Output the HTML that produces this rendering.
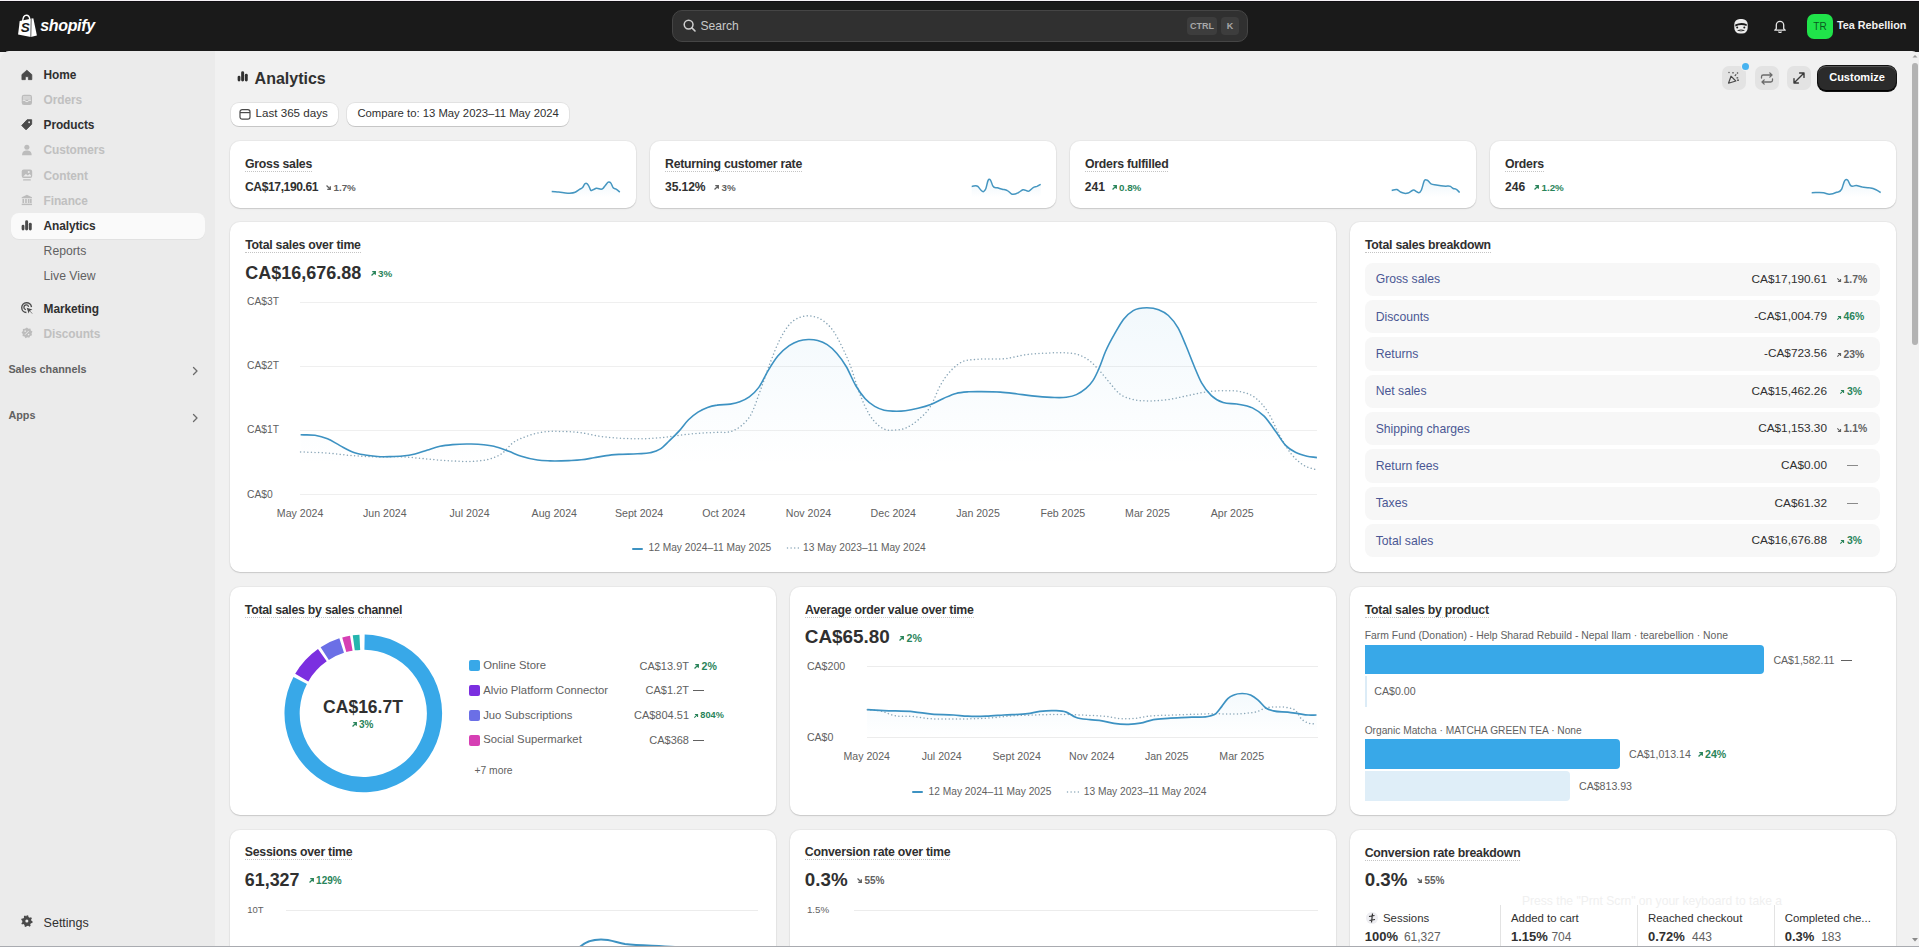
<!DOCTYPE html><html><head><meta charset="utf-8"><style>
*{margin:0;padding:0;box-sizing:border-box}
html,body{width:1919px;height:947px;overflow:hidden;background:#f1f1f1;font-family:"Liberation Sans",sans-serif;position:relative}
.t{position:absolute;white-space:nowrap;line-height:1}
.a{position:absolute}
.card{position:absolute;background:#fff;border-radius:10px;box-shadow:0 1px 0 rgba(26,26,26,.07),0 0 0 1px rgba(0,0,0,.03),0 1px 2px rgba(0,0,0,.08)}
.ul{border-bottom:1px dotted #c4c4c4}
</style></head><body><div class="a" style="left:0;top:0;width:1919px;height:1px;background:#f6f2f6"></div>
<div class="a" style="left:0;top:1px;width:1919px;height:51px;background:#1a1a1a;border-top:1px solid #110e13"></div>
<div class="a" style="left:0;top:51px;width:1919px;height:896px;background:#f1f1f1;border-radius:10px 7px 0 0"></div>
<div class="a" style="left:0;top:51px;width:215px;height:896px;background:#ebebeb;border-radius:10px 0 0 0"></div>
<svg class="a" style="left:0;top:0" width="60" height="50" viewBox="0 0 60 50">
<path d="M18.1 34.4 L19.7 21 L33.3 18.2 L36.9 35.6 L30.8 37 Z" fill="#fff"/>
<path d="M22.6 21.5 C22.8 17.5 24.6 15.2 26.4 15.2 C28.2 15.2 29.6 17 29.8 19.6" fill="none" stroke="#fff" stroke-width="1.4"/>
<path d="M31.2 18.8 L30.8 37" stroke="#1a1a1a" stroke-width=".7"/>
<text x="20.8" y="32" font-family="Liberation Sans" font-weight="700" font-style="italic" font-size="13.5" fill="#1a1a1a">S</text>
</svg>
<div class="t" style="left:40.3px;top:18.46px;font-size:16px;font-weight:700;font-style:italic;color:#fff;letter-spacing:-0.35px;line-height:16px">shopify</div>
<div class="a" style="left:672px;top:10px;width:576px;height:32px;background:#303030;border:1px solid #454545;border-radius:10px"></div>
<svg class="a" style="left:683px;top:19px" width="13" height="13" viewBox="0 0 13 13"><circle cx="5.6" cy="5.6" r="4.4" fill="none" stroke="#cfcfcf" stroke-width="1.5"/><path d="M8.9 8.9 L12 12" stroke="#cfcfcf" stroke-width="1.6" stroke-linecap="round"/></svg>
<div class="t " style="left:700.5px;top:20.1px;font-size:12.10px;font-weight:400;color:#c8c8c8;">Search</div>
<div class="a" style="left:1187px;top:17px;width:30px;height:18px;background:#3d3d3d;border-radius:4px"></div>
<div class="t " style="left:1202.0px;transform:translateX(-50%);top:21.7px;font-size:9.00px;font-weight:700;color:#a8a8a8;">CTRL</div>
<div class="a" style="left:1221px;top:17px;width:18px;height:18px;background:#3d3d3d;border-radius:4px"></div>
<div class="t " style="left:1230.0px;transform:translateX(-50%);top:21.7px;font-size:9.00px;font-weight:700;color:#a8a8a8;">K</div>
<svg class="a" style="left:1734px;top:18.5px" width="14" height="15" viewBox="0 0 14 15">
<rect x="0.3" y="0" width="13.4" height="14.5" rx="5.5" fill="#ececec"/><path d="M1.2 5.6 Q7 2.6 12.8 5.2 L12.6 7 Q7 4.9 1.4 7.4 Z" fill="#1a1a1a"/><circle cx="3.2" cy="8.5" r="1" fill="#1a1a1a"/><circle cx="10.3" cy="8.5" r="1" fill="#1a1a1a"/><path d="M3 11.6 Q7 9.2 11 11.6 Q7 13.2 3 11.6 Z" fill="#1a1a1a"/><path d="M5.6 11.6 H8.4 V12.3 H5.6 Z" fill="#ececec"/></svg>
<svg class="a" style="left:1773px;top:19px" width="14" height="14" viewBox="0 0 14 14" fill="none" stroke="#e6e6e6" stroke-width="1.3">
<path d="M3.3 9.6 V6 A3.7 3.7 0 0 1 10.7 6 V9.6 L12.2 11.2 H1.8 Z" stroke-linejoin="round"/><path d="M5.6 12.6 A1.5 1.5 0 0 0 8.4 12.6"/></svg>
<div class="a" style="left:1807px;top:14px;width:26px;height:25px;background:#20e34a;border-radius:7px"></div>
<div class="t " style="left:1820.0px;transform:translateX(-50%);top:21.5px;font-size:10.00px;font-weight:400;color:#0a5a1f;">TR</div>
<div class="t " style="left:1837.0px;top:20.2px;font-size:10.80px;font-weight:700;color:#f1f1f1;">Tea Rebellion</div>
<svg class="a" style="left:21.1px;top:68.9px" width="12.2" height="12.2" viewBox="0 0 13.5 13.5"><path d="M1 6.2 L6.5 1.3 L12 6.2 V11.8 H8.2 V8.5 H4.8 V11.8 H1 Z" fill="#4a4a4a" stroke="#4a4a4a" stroke-width="0.8" stroke-linejoin="round"/></svg>
<div class="t " style="left:43.6px;top:70.4px;font-size:11.90px;font-weight:700;color:#303030;letter-spacing:-0.1px">Home</div>
<svg class="a" style="left:21.1px;top:93.7px" width="12.2" height="12.2" viewBox="0 0 13.5 13.5"><rect x="0.8" y="0.8" width="11.4" height="11.4" rx="2.5" fill="#bcbcbc"/><path d="M2 7 H4.5 L5.3 8.4 H7.7 L8.5 7 H11" stroke="#ebebeb" stroke-width="1.1" fill="none"/><rect x="2.2" y="2.2" width="8.6" height="4.2" fill="#ebebeb" opacity=".5"/></svg>
<div class="t " style="left:43.6px;top:95.2px;font-size:11.90px;font-weight:700;color:#c0c0c0;letter-spacing:-0.1px">Orders</div>
<svg class="a" style="left:21.1px;top:118.9px" width="12.2" height="12.2" viewBox="0 0 13.5 13.5"><path d="M6.8 0.8 H11.8 V5.8 L5.6 12 L0.8 7.2 Z" fill="#4a4a4a" stroke="#4a4a4a" stroke-width="1" stroke-linejoin="round"/><circle cx="9" cy="3.6" r="1" fill="#ebebeb"/></svg>
<div class="t " style="left:43.6px;top:120.4px;font-size:11.90px;font-weight:700;color:#303030;letter-spacing:-0.1px">Products</div>
<svg class="a" style="left:21.1px;top:143.9px" width="12.2" height="12.2" viewBox="0 0 13.5 13.5"><circle cx="6.5" cy="3.5" r="2.8" fill="#bcbcbc"/><path d="M1.2 12.5 C1.2 8.5 3.5 7.3 6.5 7.3 C9.5 7.3 11.8 8.5 11.8 12.5 Z" fill="#bcbcbc"/></svg>
<div class="t " style="left:43.6px;top:145.4px;font-size:11.90px;font-weight:700;color:#c0c0c0;letter-spacing:-0.1px">Customers</div>
<svg class="a" style="left:21.1px;top:169.3px" width="12.2" height="12.2" viewBox="0 0 13.5 13.5"><rect x="0.8" y="0.6" width="11.6" height="9.4" rx="2.2" fill="#bcbcbc"/><path d="M2.4 8.4 L5.4 5.4 L7.6 7.2 L9.4 5.6 L11 7 V8.4 Z" fill="#ebebeb"/><circle cx="8.6" cy="3.2" r="1.1" fill="#ebebeb"/><rect x="2.2" y="11.4" width="8.8" height="1.4" rx=".7" fill="#bcbcbc"/></svg>
<div class="t " style="left:43.6px;top:170.8px;font-size:11.90px;font-weight:700;color:#c0c0c0;letter-spacing:-0.1px">Content</div>
<svg class="a" style="left:21.1px;top:194.4px" width="12.2" height="12.2" viewBox="0 0 13.5 13.5"><path d="M6.5 0.8 L12.2 3.6 V4.8 H0.8 V3.6 Z" fill="#bcbcbc"/><rect x="1.6" y="5.5" width="1.8" height="4.5" fill="#bcbcbc"/><rect x="4.6" y="5.5" width="1.8" height="4.5" fill="#bcbcbc"/><rect x="7.6" y="5.5" width="1.8" height="4.5" fill="#bcbcbc"/><rect x="10" y="5.5" width="1.8" height="4.5" fill="#bcbcbc"/><rect x="0.8" y="10.7" width="11.4" height="1.6" fill="#bcbcbc"/></svg>
<div class="t " style="left:43.6px;top:195.9px;font-size:11.90px;font-weight:700;color:#c0c0c0;letter-spacing:-0.1px">Finance</div>
<div class="a" style="left:11px;top:213px;width:194px;height:26px;background:#fafafa;border-radius:8px;box-shadow:0 1px 0 rgba(0,0,0,.04)"></div>
<svg class="a" style="left:21.1px;top:219.5px" width="12.2" height="12.2" viewBox="0 0 13.5 13.5"><rect x="0.7" y="5.2" width="3.1" height="6.4" rx="1.55" fill="#4a4a4a"/><rect x="4.6" y="0.4" width="3.3" height="11.2" rx="1.65" fill="#4a4a4a"/><rect x="8.7" y="3.1" width="3.2" height="8.5" rx="1.6" fill="#4a4a4a"/></svg>
<div class="t " style="left:43.6px;top:221.0px;font-size:11.90px;font-weight:700;color:#303030;letter-spacing:-0.1px">Analytics</div>
<div class="t " style="left:43.6px;top:244.9px;font-size:12.20px;font-weight:400;color:#616161;">Reports</div>
<div class="t " style="left:43.6px;top:269.7px;font-size:12.20px;font-weight:400;color:#616161;">Live View</div>
<svg class="a" style="left:21.1px;top:302.4px" width="12.2" height="12.2" viewBox="0 0 13.5 13.5"><path d="M11.6 5.6 A5.4 5.4 0 1 0 6 11.6" fill="none" stroke="#4a4a4a" stroke-width="1.5"/><path d="M8.4 5.4 A2.6 2.6 0 1 0 5.4 8.4" fill="none" stroke="#4a4a4a" stroke-width="1.4"/><path d="M6.3 6.3 L12.6 8.4 L9.8 9.6 L12.8 12.6 L12.4 13 L9.4 10 L8.4 12.8 Z" fill="#4a4a4a"/></svg>
<div class="t " style="left:43.6px;top:303.9px;font-size:11.90px;font-weight:700;color:#303030;letter-spacing:-0.1px">Marketing</div>
<svg class="a" style="left:21.1px;top:327.2px" width="12.2" height="12.2" viewBox="0 0 13.5 13.5"><path d="M6.5 0.5 L8.2 1.9 L10.4 1.6 L10.9 3.8 L12.7 5.1 L11.7 7.1 L12.2 9.2 L10.1 9.9 L9.1 11.9 L7 11.3 L5 12.4 L3.9 10.5 L1.7 10 L2 7.8 L0.6 6.1 L2.1 4.5 L2.1 2.3 L4.3 2 Z" fill="#bcbcbc"/><path d="M4.4 8.6 L8.6 4.4" stroke="#ebebeb" stroke-width="1.1"/><circle cx="4.6" cy="4.6" r=".9" fill="#ebebeb"/><circle cx="8.4" cy="8.4" r=".9" fill="#ebebeb"/></svg>
<div class="t " style="left:43.6px;top:328.7px;font-size:11.90px;font-weight:700;color:#c0c0c0;letter-spacing:-0.1px">Discounts</div>
<div class="t " style="left:8.4px;top:363.9px;font-size:10.80px;font-weight:700;color:#616161;">Sales channels</div>
<div class="t " style="left:8.4px;top:410.1px;font-size:10.80px;font-weight:700;color:#616161;">Apps</div>
<svg class="a" style="left:191px;top:366px" width="8" height="10" viewBox="0 0 8 10"><path d="M2.5 1.5 L6 5 L2.5 8.5" fill="none" stroke="#6b6b6b" stroke-width="1.3" stroke-linecap="round" stroke-linejoin="round"/></svg>
<svg class="a" style="left:191px;top:413px" width="8" height="10" viewBox="0 0 8 10"><path d="M2.5 1.5 L6 5 L2.5 8.5" fill="none" stroke="#6b6b6b" stroke-width="1.3" stroke-linecap="round" stroke-linejoin="round"/></svg>
<svg class="a" style="left:21.1px;top:915.1px" width="12.2" height="12.2" viewBox="0 0 13.5 13.5"><path d="M6.5 0.3 L8 0.6 L8.3 2.2 L9.6 3 L11.1 2.4 L12.1 3.6 L11.2 5 L11.5 6.5 L12.9 7.3 L12.6 8.8 L11 9.2 L10.2 10.5 L10.7 12 L9.4 12.9 L8.1 11.9 L6.5 12.1 L5.4 13.2 L4 12.7 L3.9 11.1 L2.7 10.1 L1.1 10.4 L0.4 9.1 L1.5 8 L1.4 6.4 L0.2 5.3 L0.8 3.9 L2.4 3.9 L3.4 2.7 L3.2 1.1 L4.6 0.5 L5.6 1.6 Z" fill="#4a4a4a"/><circle cx="6.5" cy="6.6" r="1.7" fill="#ebebeb"/></svg>
<div class="t " style="left:43.6px;top:916.7px;font-size:12.50px;font-weight:400;color:#303030;">Settings</div>
<svg class="a" style="left:237.1px;top:71.1px" width="12.2" height="12.2" viewBox="0 0 13.5 13.5"><rect x="0.7" y="5.2" width="3.1" height="6.4" rx="1.55" fill="#303030"/><rect x="4.6" y="0.4" width="3.3" height="11.2" rx="1.65" fill="#303030"/><rect x="8.7" y="3.1" width="3.2" height="8.5" rx="1.6" fill="#303030"/></svg>
<div class="t " style="left:254.6px;top:70.6px;font-size:16.00px;font-weight:700;color:#303030;">Analytics</div>
<div class="a" style="left:231px;top:103px;width:107px;height:23px;background:#fff;border-radius:8px;box-shadow:0 0 0 1px rgba(0,0,0,.06),0 1px 0 rgba(0,0,0,.12)"></div>
<div class="a" style="left:347px;top:103px;width:222px;height:23px;background:#fff;border-radius:8px;box-shadow:0 0 0 1px rgba(0,0,0,.06),0 1px 0 rgba(0,0,0,.12)"></div>
<svg class="a" style="left:239px;top:107.5px" width="12" height="12" viewBox="0 0 12 12" fill="none" stroke="#4a4a4a" stroke-width="1.2"><rect x="1" y="1.6" width="10" height="9.6" rx="2.2"/><path d="M1 4.6 H11"/></svg>
<div class="t " style="left:255.6px;top:107.0px;font-size:11.60px;font-weight:400;color:#303030;">Last 365 days</div>
<div class="t " style="left:357.4px;top:107.8px;font-size:11.30px;font-weight:400;color:#303030;">Compare to: 13 May 2023–11 May 2024</div>
<div class="a" style="left:1722.0px;top:66px;width:24px;height:24px;background:#e3e3e3;border-radius:7px"></div>
<div class="a" style="left:1754.5px;top:66px;width:24px;height:24px;background:#e3e3e3;border-radius:7px"></div>
<div class="a" style="left:1787.0px;top:66px;width:24px;height:24px;background:#e3e3e3;border-radius:7px"></div>
<div class="a" style="left:1742.2px;top:63.1px;width:7px;height:7px;background:#48b3f0;border-radius:50%;box-shadow:0 0 0 1px #f1f1f1"></div>
<svg class="a" style="left:1727px;top:71px" width="14" height="14" viewBox="0 0 14 14" fill="none" stroke="#4a4a4a" stroke-width="1.2" stroke-linejoin="round">
<path d="M1.5 12.2 L4 5.2 L8.8 10 Z"/><circle cx="2" cy="1.5" r=".7" fill="#4a4a4a" stroke="none"/><circle cx="10.5" cy="2" r=".8" fill="#4a4a4a" stroke="none"/><circle cx="11" cy="9.2" r=".9" fill="#4a4a4a" stroke="none"/><path d="M6 1 V2.4 M7.8 4.8 L9.2 3.4 M9.5 6.8 H11.2"/></svg>
<svg class="a" style="left:1759.5px;top:71.5px" width="14" height="13" viewBox="0 0 14 13" fill="none" stroke="#6b6b6b" stroke-width="1.3" stroke-linecap="round" stroke-linejoin="round">
<path d="M1.5 6 V4.8 A1.8 1.8 0 0 1 3.3 3 H12 M9.8 0.9 L12 3 L9.8 5.1"/><path d="M12.5 7 V8.2 A1.8 1.8 0 0 1 10.7 10 H2 M4.2 12.1 L2 10 L4.2 7.9"/></svg>
<svg class="a" style="left:1792px;top:71px" width="14" height="14" viewBox="0 0 14 14" fill="none" stroke="#3a3a3a" stroke-width="1.4" stroke-linecap="round" stroke-linejoin="round">
<path d="M2 12 L12 2 M7.6 2 H12 V6.4 M2 7.6 V12 H6.4"/></svg>
<div class="a" style="left:1818px;top:66px;width:78px;height:25px;background:#2b2b2b;border-radius:8px;box-shadow:inset 0 -1px 0 #000,inset 0 1px 0 rgba(255,255,255,.2),0 0 0 1px #111"></div>
<div class="t " style="left:1857.0px;transform:translateX(-50%);top:71.8px;font-size:11.00px;font-weight:700;color:#fff;">Customize</div>
<div class="a" style="left:1912px;top:63px;width:6px;height:282px;background:#b3b3b3;border-radius:3px"></div>
<svg class="a" style="left:1911px;top:53px" width="8" height="6" viewBox="0 0 8 6"><path d="M1.5 4.5 L4 2 L6.5 4.5 Z" fill="#9a9a9a"/></svg>
<svg class="a" style="left:1911px;top:937px" width="8" height="6" viewBox="0 0 8 6"><path d="M1 1 L4 4.5 L7 1 Z" fill="#8a8a8a"/></svg>
<div class="a" style="left:0;top:946px;width:1919px;height:1px;background:#a9abb0"></div>
<div class="card" style="left:230px;top:141px;width:406px;height:67px"></div>
<div class="card" style="left:650px;top:141px;width:406px;height:67px"></div>
<div class="card" style="left:1070px;top:141px;width:406px;height:67px"></div>
<div class="card" style="left:1490px;top:141px;width:406px;height:67px"></div>
<div class="t " style="left:245.0px;top:157.8px;font-size:12.30px;font-weight:700;color:#303030;letter-spacing:-0.25px"><span class="ul">Gross sales</span></div>
<div class="t " style="left:665.0px;top:157.8px;font-size:12.30px;font-weight:700;color:#303030;letter-spacing:-0.25px"><span class="ul">Returning customer rate</span></div>
<div class="t " style="left:1085.0px;top:157.8px;font-size:12.30px;font-weight:700;color:#303030;letter-spacing:-0.25px"><span class="ul">Orders fulfilled</span></div>
<div class="t " style="left:1505.0px;top:157.8px;font-size:12.30px;font-weight:700;color:#303030;letter-spacing:-0.25px"><span class="ul">Orders</span></div>
<div class="t " style="left:245.0px;top:181.2px;font-size:12.10px;font-weight:700;color:#303030;letter-spacing:-0.4px">CA$17,190.61</div>
<svg class="a" style="left:325.0px;top:184.4px" width="7" height="7" viewBox="0 0 10 10"><path d="M2.2 2.2 L7.6 7.6 M3.2 7.6 H7.6 V3.2" fill="none" stroke="#616161" stroke-width="1.8"/></svg>
<div class="t " style="left:333.5px;top:183.1px;font-size:9.80px;font-weight:700;color:#616161;">1.7%</div>
<div class="t " style="left:665.0px;top:181.2px;font-size:12.10px;font-weight:700;color:#303030;letter-spacing:-0.1px">35.12%</div>
<svg class="a" style="left:713.0px;top:184.4px" width="7" height="7" viewBox="0 0 10 10"><path d="M2.2 7.8 L7.6 2.4 M3.2 2.4 H7.6 V6.8" fill="none" stroke="#616161" stroke-width="1.8"/></svg>
<div class="t " style="left:721.5px;top:183.1px;font-size:9.80px;font-weight:700;color:#616161;">3%</div>
<div class="t " style="left:1084.7px;top:181.2px;font-size:12.10px;font-weight:700;color:#303030;">241</div>
<svg class="a" style="left:1110.5px;top:184.4px" width="7" height="7" viewBox="0 0 10 10"><path d="M2.2 7.8 L7.6 2.4 M3.2 2.4 H7.6 V6.8" fill="none" stroke="#29845a" stroke-width="1.8"/></svg>
<div class="t " style="left:1119.0px;top:183.1px;font-size:9.80px;font-weight:700;color:#29845a;">0.8%</div>
<div class="t " style="left:1505.0px;top:181.2px;font-size:12.10px;font-weight:700;color:#303030;">246</div>
<svg class="a" style="left:1533.0px;top:184.4px" width="7" height="7" viewBox="0 0 10 10"><path d="M2.2 7.8 L7.6 2.4 M3.2 2.4 H7.6 V6.8" fill="none" stroke="#29845a" stroke-width="1.8"/></svg>
<div class="t " style="left:1541.5px;top:183.1px;font-size:9.80px;font-weight:700;color:#29845a;">1.2%</div>
<svg class="a" style="left:230px;top:141px" width="406" height="67" viewBox="0 0 406 67"><defs><linearGradient id="sg230" x1="0" y1="38" x2="0" y2="56" gradientUnits="userSpaceOnUse"><stop offset="0" stop-color="#3a9fd8" stop-opacity=".10"/><stop offset="1" stop-color="#3a9fd8" stop-opacity="0"/></linearGradient></defs><path d="M321.7 50.6 C324.1 50.8 326.4 50.9 328.8 51.1 C331.9 51.4 335.1 52.3 338.2 52.2 C340.5 52.1 342.9 52.3 345.2 51.3 C346.8 50.6 348.3 49.2 349.9 48.2 C350.7 47.7 351.5 47.6 352.3 46.8 C353.2 45.9 354.2 43.2 355.1 42.6 C355.7 42.2 356.4 42.2 357.0 42.6 C357.6 43.0 358.2 43.9 358.8 45.0 C359.4 46.1 360.1 48.5 360.7 49.2 C361.5 50.1 362.2 48.9 363.0 48.7 C364.1 48.4 365.2 47.6 366.3 47.3 C368.5 46.7 370.7 49.5 372.9 47.5 C373.7 46.8 374.5 45.4 375.3 44.5 C376.4 43.2 377.4 41.2 378.5 41.0 C379.3 40.8 380.1 41.1 380.9 42.1 C381.7 43.1 382.4 45.8 383.2 46.8 C384.2 48.1 385.1 47.6 386.1 48.2 C387.3 49.0 388.6 50.1 389.8 51.1 L389.8 67 L321.7 67 Z" fill="url(#sg230)"/><path d="M321.7 50.6 C324.1 50.8 326.4 50.9 328.8 51.1 C331.9 51.4 335.1 52.3 338.2 52.2 C340.5 52.1 342.9 52.3 345.2 51.3 C346.8 50.6 348.3 49.2 349.9 48.2 C350.7 47.7 351.5 47.6 352.3 46.8 C353.2 45.9 354.2 43.2 355.1 42.6 C355.7 42.2 356.4 42.2 357.0 42.6 C357.6 43.0 358.2 43.9 358.8 45.0 C359.4 46.1 360.1 48.5 360.7 49.2 C361.5 50.1 362.2 48.9 363.0 48.7 C364.1 48.4 365.2 47.6 366.3 47.3 C368.5 46.7 370.7 49.5 372.9 47.5 C373.7 46.8 374.5 45.4 375.3 44.5 C376.4 43.2 377.4 41.2 378.5 41.0 C379.3 40.8 380.1 41.1 380.9 42.1 C381.7 43.1 382.4 45.8 383.2 46.8 C384.2 48.1 385.1 47.6 386.1 48.2 C387.3 49.0 388.6 50.1 389.8 51.1" fill="none" stroke="#4596c0" stroke-width="1.5" stroke-linejoin="round"/></svg>
<svg class="a" style="left:650px;top:141px" width="406" height="67" viewBox="0 0 406 67"><defs><linearGradient id="sg650" x1="0" y1="38" x2="0" y2="56" gradientUnits="userSpaceOnUse"><stop offset="0" stop-color="#3a9fd8" stop-opacity=".10"/><stop offset="1" stop-color="#3a9fd8" stop-opacity="0"/></linearGradient></defs><path d="M321.7 45.4 C323.7 45.4 325.8 43.8 327.8 45.4 C328.7 46.2 329.7 47.8 330.6 48.7 C331.6 49.6 332.5 51.0 333.5 50.6 C334.3 50.3 335.0 49.7 335.8 47.8 C336.6 45.9 337.3 40.8 338.1 39.3 C338.9 37.8 339.7 38.1 340.5 39.1 C341.3 40.1 342.0 43.5 342.8 44.9 C344.4 47.8 345.9 46.3 347.5 46.8 C349.1 47.4 350.6 47.8 352.2 48.2 C353.9 48.7 355.7 48.7 357.4 49.6 C359.0 50.4 360.5 52.7 362.1 53.2 C364.3 53.9 366.4 52.6 368.6 51.5 C370.0 50.8 371.5 49.1 372.9 48.7 C374.9 48.1 377.0 50.9 379.0 50.1 C380.4 49.5 381.8 47.4 383.2 46.6 C384.4 45.9 385.7 45.9 386.9 45.4 C388.2 44.8 389.4 44.0 390.7 43.3 L390.7 67 L321.7 67 Z" fill="url(#sg650)"/><path d="M321.7 45.4 C323.7 45.4 325.8 43.8 327.8 45.4 C328.7 46.2 329.7 47.8 330.6 48.7 C331.6 49.6 332.5 51.0 333.5 50.6 C334.3 50.3 335.0 49.7 335.8 47.8 C336.6 45.9 337.3 40.8 338.1 39.3 C338.9 37.8 339.7 38.1 340.5 39.1 C341.3 40.1 342.0 43.5 342.8 44.9 C344.4 47.8 345.9 46.3 347.5 46.8 C349.1 47.4 350.6 47.8 352.2 48.2 C353.9 48.7 355.7 48.7 357.4 49.6 C359.0 50.4 360.5 52.7 362.1 53.2 C364.3 53.9 366.4 52.6 368.6 51.5 C370.0 50.8 371.5 49.1 372.9 48.7 C374.9 48.1 377.0 50.9 379.0 50.1 C380.4 49.5 381.8 47.4 383.2 46.6 C384.4 45.9 385.7 45.9 386.9 45.4 C388.2 44.8 389.4 44.0 390.7 43.3" fill="none" stroke="#4596c0" stroke-width="1.5" stroke-linejoin="round"/></svg>
<svg class="a" style="left:1070px;top:141px" width="406" height="67" viewBox="0 0 406 67"><defs><linearGradient id="sg1070" x1="0" y1="38" x2="0" y2="56" gradientUnits="userSpaceOnUse"><stop offset="0" stop-color="#3a9fd8" stop-opacity=".10"/><stop offset="1" stop-color="#3a9fd8" stop-opacity="0"/></linearGradient></defs><path d="M321.7 49.4 C323.4 49.1 325.2 48.0 326.9 48.5 C328.3 48.9 329.7 50.7 331.1 51.3 C333.4 52.4 335.8 52.7 338.1 52.0 C339.7 51.5 341.2 49.8 342.8 49.2 C345.6 48.1 348.5 55.3 351.3 49.2 C352.4 46.8 353.5 40.8 354.6 39.3 C355.5 38.0 356.5 38.9 357.4 39.3 C358.5 39.8 359.6 41.8 360.7 42.6 C362.6 43.9 364.4 43.6 366.3 44.0 C369.4 44.6 372.6 45.0 375.7 45.2 C377.3 45.3 378.8 44.6 380.4 45.4 C381.3 45.9 382.3 47.0 383.2 47.5 C384.1 48.0 385.1 47.7 386.0 48.2 C387.2 48.8 388.5 50.4 389.7 51.5 L389.7 67 L321.7 67 Z" fill="url(#sg1070)"/><path d="M321.7 49.4 C323.4 49.1 325.2 48.0 326.9 48.5 C328.3 48.9 329.7 50.7 331.1 51.3 C333.4 52.4 335.8 52.7 338.1 52.0 C339.7 51.5 341.2 49.8 342.8 49.2 C345.6 48.1 348.5 55.3 351.3 49.2 C352.4 46.8 353.5 40.8 354.6 39.3 C355.5 38.0 356.5 38.9 357.4 39.3 C358.5 39.8 359.6 41.8 360.7 42.6 C362.6 43.9 364.4 43.6 366.3 44.0 C369.4 44.6 372.6 45.0 375.7 45.2 C377.3 45.3 378.8 44.6 380.4 45.4 C381.3 45.9 382.3 47.0 383.2 47.5 C384.1 48.0 385.1 47.7 386.0 48.2 C387.2 48.8 388.5 50.4 389.7 51.5" fill="none" stroke="#4596c0" stroke-width="1.5" stroke-linejoin="round"/></svg>
<svg class="a" style="left:1490px;top:141px" width="406" height="67" viewBox="0 0 406 67"><defs><linearGradient id="sg1490" x1="0" y1="38" x2="0" y2="56" gradientUnits="userSpaceOnUse"><stop offset="0" stop-color="#3a9fd8" stop-opacity=".10"/><stop offset="1" stop-color="#3a9fd8" stop-opacity="0"/></linearGradient></defs><path d="M321.7 51.7 C325.6 51.7 329.6 51.0 333.5 51.7 C335.4 52.0 337.2 53.1 339.1 53.2 C341.6 53.3 344.1 52.5 346.6 51.3 C348.3 50.5 350.0 51.7 351.7 48.2 C352.7 46.2 353.6 41.3 354.6 39.8 C355.7 38.1 356.7 38.2 357.8 39.3 C358.6 40.1 359.4 42.9 360.2 44.0 C362.2 46.9 364.3 44.2 366.3 44.5 C368.3 44.9 370.4 45.7 372.4 46.1 C374.7 46.5 377.1 46.3 379.4 46.8 C381.6 47.2 383.8 47.7 386.0 48.7 C387.6 49.4 389.1 50.6 390.7 51.5 L390.7 67 L321.7 67 Z" fill="url(#sg1490)"/><path d="M321.7 51.7 C325.6 51.7 329.6 51.0 333.5 51.7 C335.4 52.0 337.2 53.1 339.1 53.2 C341.6 53.3 344.1 52.5 346.6 51.3 C348.3 50.5 350.0 51.7 351.7 48.2 C352.7 46.2 353.6 41.3 354.6 39.8 C355.7 38.1 356.7 38.2 357.8 39.3 C358.6 40.1 359.4 42.9 360.2 44.0 C362.2 46.9 364.3 44.2 366.3 44.5 C368.3 44.9 370.4 45.7 372.4 46.1 C374.7 46.5 377.1 46.3 379.4 46.8 C381.6 47.2 383.8 47.7 386.0 48.7 C387.6 49.4 389.1 50.6 390.7 51.5" fill="none" stroke="#4596c0" stroke-width="1.5" stroke-linejoin="round"/></svg>
<div class="card" style="left:230px;top:222px;width:1106px;height:350px"></div>
<div class="t " style="left:245.2px;top:239.1px;font-size:12.30px;font-weight:700;color:#303030;letter-spacing:-0.25px"><span class="ul">Total sales over time</span></div>
<div class="t " style="left:245.2px;top:263.7px;font-size:18.00px;font-weight:700;color:#303030;">CA$16,676.88</div>
<svg class="a" style="left:369.5px;top:270.0px" width="7" height="7" viewBox="0 0 10 10"><path d="M2.2 7.8 L7.6 2.4 M3.2 2.4 H7.6 V6.8" fill="none" stroke="#29845a" stroke-width="1.8"/></svg>
<div class="t " style="left:378.0px;top:268.7px;font-size:9.80px;font-weight:700;color:#29845a;">3%</div>
<div class="a" style="left:300px;top:301.6px;width:1017px;height:1px;background:#efefef"></div>
<div class="t " style="left:247.0px;top:297.1px;font-size:10.30px;font-weight:400;color:#616161;">CA$3T</div>
<div class="a" style="left:300px;top:365.9px;width:1017px;height:1px;background:#efefef"></div>
<div class="t " style="left:247.0px;top:361.4px;font-size:10.30px;font-weight:400;color:#616161;">CA$2T</div>
<div class="a" style="left:300px;top:429.8px;width:1017px;height:1px;background:#efefef"></div>
<div class="t " style="left:247.0px;top:425.3px;font-size:10.30px;font-weight:400;color:#616161;">CA$1T</div>
<div class="a" style="left:300px;top:494.0px;width:1017px;height:1px;background:#efefef"></div>
<div class="t " style="left:247.0px;top:489.5px;font-size:10.30px;font-weight:400;color:#616161;">CA$0</div>
<div class="t " style="left:300.1px;transform:translateX(-50%);top:508.3px;font-size:10.60px;font-weight:400;color:#616161;">May 2024</div>
<div class="t " style="left:384.8px;transform:translateX(-50%);top:508.3px;font-size:10.60px;font-weight:400;color:#616161;">Jun 2024</div>
<div class="t " style="left:469.6px;transform:translateX(-50%);top:508.3px;font-size:10.60px;font-weight:400;color:#616161;">Jul 2024</div>
<div class="t " style="left:554.3px;transform:translateX(-50%);top:508.3px;font-size:10.60px;font-weight:400;color:#616161;">Aug 2024</div>
<div class="t " style="left:639.1px;transform:translateX(-50%);top:508.3px;font-size:10.60px;font-weight:400;color:#616161;">Sept 2024</div>
<div class="t " style="left:723.8px;transform:translateX(-50%);top:508.3px;font-size:10.60px;font-weight:400;color:#616161;">Oct 2024</div>
<div class="t " style="left:808.5px;transform:translateX(-50%);top:508.3px;font-size:10.60px;font-weight:400;color:#616161;">Nov 2024</div>
<div class="t " style="left:893.3px;transform:translateX(-50%);top:508.3px;font-size:10.60px;font-weight:400;color:#616161;">Dec 2024</div>
<div class="t " style="left:978.0px;transform:translateX(-50%);top:508.3px;font-size:10.60px;font-weight:400;color:#616161;">Jan 2025</div>
<div class="t " style="left:1062.8px;transform:translateX(-50%);top:508.3px;font-size:10.60px;font-weight:400;color:#616161;">Feb 2025</div>
<div class="t " style="left:1147.5px;transform:translateX(-50%);top:508.3px;font-size:10.60px;font-weight:400;color:#616161;">Mar 2025</div>
<div class="t " style="left:1232.2px;transform:translateX(-50%);top:508.3px;font-size:10.60px;font-weight:400;color:#616161;">Apr 2025</div>
<svg class="a" style="left:0;top:0" width="1919" height="947" viewBox="0 0 1919 947">
<defs><linearGradient id="mg" x1="0" y1="300" x2="0" y2="495" gradientUnits="userSpaceOnUse"><stop offset="0" stop-color="#3e9fd6" stop-opacity=".07"/><stop offset=".85" stop-color="#3e9fd6" stop-opacity=".0"/></linearGradient></defs>
<path d="M300.6 434.8 C305.4 435.0 310.2 434.5 315.0 435.3 C319.2 436.0 323.3 437.1 327.5 438.8 C331.7 440.5 335.8 443.4 340.0 445.6 C344.2 447.8 348.3 450.3 352.5 451.9 C356.7 453.5 360.8 454.2 365.0 455.0 C369.2 455.8 373.3 456.2 377.5 456.5 C381.7 456.8 385.8 456.7 390.0 456.6 C394.2 456.5 398.3 456.4 402.5 456.0 C406.7 455.6 410.8 455.0 415.0 454.0 C419.2 453.0 423.3 451.3 427.5 450.0 C431.7 448.7 435.8 447.2 440.0 446.3 C444.2 445.4 448.3 445.0 452.5 444.6 C458.8 444.0 465.0 443.8 471.3 444.0 C475.5 444.1 479.6 444.3 483.8 444.8 C488.0 445.3 492.1 445.8 496.3 446.9 C500.5 448.0 504.6 449.7 508.8 451.3 C513.0 452.9 517.1 454.9 521.3 456.3 C526.7 458.1 532.1 459.2 537.5 460.0 C541.7 460.6 545.8 460.7 550.0 460.9 C556.3 461.1 562.5 460.9 568.8 460.6 C573.0 460.4 577.1 460.3 581.3 459.8 C585.5 459.3 589.6 458.5 593.8 457.8 C598.0 457.1 602.1 456.2 606.3 455.6 C610.5 455.0 614.6 454.7 618.8 454.4 C625.0 454.0 631.3 454.2 637.5 453.8 C641.7 453.5 645.8 453.8 650.0 452.8 C653.3 452.0 656.7 451.3 660.0 449.2 C663.2 447.2 666.3 443.6 669.5 440.6 C672.7 437.6 675.8 434.6 679.0 431.1 C682.2 427.6 685.3 422.9 688.5 419.7 C691.7 416.5 694.8 414.2 698.0 412.1 C701.2 410.1 704.3 408.6 707.5 407.4 C710.7 406.2 713.8 405.6 717.0 405.1 C721.4 404.3 725.9 404.9 730.3 404.1 C733.5 403.5 736.6 402.9 739.8 401.7 C743.0 400.5 746.1 399.3 749.3 396.9 C752.5 394.5 755.6 391.8 758.8 387.4 C762.0 383.0 765.1 375.5 768.3 370.3 C771.5 365.1 774.6 360.0 777.8 356.1 C781.6 351.4 785.4 348.2 789.2 345.6 C792.4 343.4 795.5 341.9 798.7 340.9 C801.9 339.9 805.0 339.6 808.2 339.5 C811.4 339.4 814.5 339.6 817.7 340.5 C820.9 341.4 824.0 342.6 827.2 344.7 C830.4 346.8 833.5 349.6 836.7 353.2 C839.9 356.8 843.0 361.1 846.2 366.5 C849.4 371.9 852.5 380.1 855.7 385.5 C858.9 390.9 862.0 395.3 865.2 398.8 C868.4 402.3 871.5 404.5 874.7 406.4 C877.9 408.3 881.0 409.4 884.2 410.2 C887.0 410.9 889.9 411.0 892.7 411.1 C896.9 411.3 901.1 411.2 905.3 410.7 C909.5 410.2 913.8 409.3 918.0 408.3 C922.2 407.3 926.5 406.2 930.7 404.5 C934.9 402.9 939.2 400.3 943.4 398.4 C947.6 396.6 951.8 394.5 956.0 393.4 C960.2 392.3 964.5 392.1 968.7 391.8 C972.9 391.5 977.2 391.6 981.4 391.6 C987.7 391.6 994.1 391.6 1000.4 392.1 C1004.6 392.4 1008.8 392.9 1013.0 393.4 C1019.3 394.1 1025.7 395.2 1032.0 395.9 C1038.3 396.6 1044.7 397.2 1051.0 397.4 C1056.1 397.5 1061.2 398.0 1066.3 397.2 C1069.7 396.7 1073.0 396.2 1076.4 394.6 C1079.4 393.2 1082.3 391.5 1085.3 388.9 C1087.8 386.7 1090.4 384.7 1092.9 380.7 C1095.0 377.4 1097.1 372.9 1099.2 368.0 C1101.3 363.1 1103.4 356.4 1105.5 351.5 C1108.9 343.6 1112.2 338.0 1115.6 332.1 C1118.2 327.5 1120.8 322.8 1123.4 319.4 C1126.7 315.1 1129.9 312.6 1133.2 310.6 C1137.8 307.8 1142.3 307.7 1146.9 307.7 C1150.8 307.7 1154.7 308.1 1158.6 309.7 C1161.9 311.0 1165.1 312.4 1168.4 315.5 C1171.7 318.6 1174.9 322.2 1178.2 328.2 C1180.8 333.0 1183.4 339.6 1186.0 345.8 C1188.6 352.0 1191.2 359.1 1193.8 365.3 C1196.4 371.5 1199.0 378.1 1201.6 382.9 C1204.9 388.9 1208.1 392.4 1211.4 395.6 C1215.3 399.4 1219.2 401.1 1223.1 402.5 C1227.7 404.2 1232.2 403.2 1236.8 404.0 C1242.0 404.9 1247.2 405.3 1252.4 407.9 C1256.3 409.9 1260.2 412.1 1264.1 416.1 C1268.0 420.1 1272.0 426.4 1275.9 431.8 C1279.1 436.2 1282.4 442.0 1285.6 445.4 C1288.9 448.8 1292.1 450.6 1295.4 452.3 C1299.3 454.4 1303.2 455.3 1307.1 456.2 C1310.4 457.0 1313.6 457.1 1316.9 457.6 L1316 494.5 L301 494.5 Z" fill="url(#mg)"/>
<path d="M300.6 451.9 C309.6 452.3 318.5 452.4 327.5 453.1 C335.8 453.7 344.2 455.0 352.5 455.6 C360.8 456.2 369.2 456.7 377.5 456.9 C385.8 457.1 394.2 456.5 402.5 456.9 C410.8 457.2 419.2 458.3 427.5 459.0 C435.8 459.7 444.2 460.7 452.5 461.0 C460.8 461.3 469.2 462.0 477.5 461.0 C482.5 460.4 487.5 460.0 492.5 458.1 C495.8 456.8 499.2 455.6 502.5 453.1 C505.8 450.6 509.2 445.7 512.5 443.1 C516.7 439.9 520.8 438.6 525.0 436.9 C531.3 434.4 537.5 432.8 543.8 431.9 C550.0 431.0 556.3 431.4 562.5 431.5 C568.8 431.6 575.0 432.0 581.3 432.8 C587.5 433.6 593.8 435.4 600.0 436.3 C606.3 437.2 612.5 437.7 618.8 438.1 C625.0 438.5 631.3 438.8 637.5 438.8 C645.8 438.8 654.2 438.3 662.5 437.5 C668.8 436.9 675.0 435.7 681.3 435.0 C687.5 434.3 693.8 433.5 700.0 433.1 C705.7 432.7 711.3 432.8 717.0 432.4 C722.1 432.1 727.1 433.1 732.2 431.1 C735.4 429.8 738.5 428.2 741.7 425.4 C744.9 422.5 748.0 420.0 751.2 414.0 C754.4 408.0 757.5 397.9 760.7 389.3 C763.9 380.8 767.0 370.9 770.2 362.7 C773.4 354.5 776.5 346.2 779.7 339.9 C782.9 333.6 786.0 328.4 789.2 324.7 C793.0 320.2 796.8 318.5 800.6 317.1 C804.4 315.7 808.2 315.6 812.0 316.2 C815.8 316.8 819.6 318.1 823.4 320.9 C826.6 323.2 829.7 326.0 832.9 330.4 C836.1 334.8 839.2 341.0 842.4 347.5 C844.9 352.7 847.5 358.1 850.0 364.6 C853.2 372.8 856.3 384.9 859.5 393.1 C862.7 401.3 865.8 408.6 869.0 414.0 C872.2 419.4 875.3 422.7 878.5 425.4 C881.7 428.1 884.8 429.7 888.0 430.2 C889.6 430.4 891.1 430.2 892.7 430.1 C896.9 429.9 901.1 429.9 905.3 428.2 C909.5 426.5 913.8 423.7 918.0 420.0 C922.2 416.3 926.5 413.1 930.7 406.0 C934.1 400.4 937.4 390.4 940.8 384.5 C944.2 378.5 947.6 374.2 951.0 370.5 C954.8 366.4 958.6 363.6 962.4 361.7 C966.6 359.6 970.8 360.1 975.0 359.5 C985.6 358.1 996.1 359.9 1006.7 358.5 C1013.0 357.6 1019.4 355.6 1025.7 354.7 C1032.0 353.8 1038.4 353.5 1044.7 353.2 C1051.0 352.9 1057.4 352.5 1063.7 352.8 C1067.9 353.0 1072.2 352.8 1076.4 354.1 C1080.6 355.4 1084.9 357.2 1089.1 360.4 C1093.3 363.6 1097.5 368.4 1101.7 373.1 C1104.4 376.2 1107.1 379.8 1109.8 382.9 C1113.0 386.7 1116.3 391.0 1119.5 393.7 C1124.1 397.5 1128.6 398.3 1133.2 399.5 C1138.4 400.9 1143.6 400.8 1148.8 400.9 C1155.3 401.0 1161.9 400.4 1168.4 399.5 C1174.9 398.6 1181.4 396.9 1187.9 395.6 C1194.4 394.3 1201.0 392.5 1207.5 391.7 C1214.0 390.9 1220.5 390.6 1227.0 390.7 C1231.6 390.8 1236.1 390.6 1240.7 391.7 C1245.9 393.0 1251.1 394.2 1256.3 398.6 C1260.2 401.9 1264.1 406.1 1268.0 412.2 C1271.9 418.4 1275.9 428.7 1279.8 435.7 C1283.7 442.7 1287.6 449.3 1291.5 454.2 C1295.4 459.1 1299.3 462.4 1303.2 465.0 C1307.8 468.0 1312.3 468.3 1316.9 469.9" fill="none" stroke="#8ba7b8" stroke-width="1.5" stroke-dasharray="0.01 3.6" stroke-linecap="round"/>
<path d="M300.6 434.8 C305.4 435.0 310.2 434.5 315.0 435.3 C319.2 436.0 323.3 437.1 327.5 438.8 C331.7 440.5 335.8 443.4 340.0 445.6 C344.2 447.8 348.3 450.3 352.5 451.9 C356.7 453.5 360.8 454.2 365.0 455.0 C369.2 455.8 373.3 456.2 377.5 456.5 C381.7 456.8 385.8 456.7 390.0 456.6 C394.2 456.5 398.3 456.4 402.5 456.0 C406.7 455.6 410.8 455.0 415.0 454.0 C419.2 453.0 423.3 451.3 427.5 450.0 C431.7 448.7 435.8 447.2 440.0 446.3 C444.2 445.4 448.3 445.0 452.5 444.6 C458.8 444.0 465.0 443.8 471.3 444.0 C475.5 444.1 479.6 444.3 483.8 444.8 C488.0 445.3 492.1 445.8 496.3 446.9 C500.5 448.0 504.6 449.7 508.8 451.3 C513.0 452.9 517.1 454.9 521.3 456.3 C526.7 458.1 532.1 459.2 537.5 460.0 C541.7 460.6 545.8 460.7 550.0 460.9 C556.3 461.1 562.5 460.9 568.8 460.6 C573.0 460.4 577.1 460.3 581.3 459.8 C585.5 459.3 589.6 458.5 593.8 457.8 C598.0 457.1 602.1 456.2 606.3 455.6 C610.5 455.0 614.6 454.7 618.8 454.4 C625.0 454.0 631.3 454.2 637.5 453.8 C641.7 453.5 645.8 453.8 650.0 452.8 C653.3 452.0 656.7 451.3 660.0 449.2 C663.2 447.2 666.3 443.6 669.5 440.6 C672.7 437.6 675.8 434.6 679.0 431.1 C682.2 427.6 685.3 422.9 688.5 419.7 C691.7 416.5 694.8 414.2 698.0 412.1 C701.2 410.1 704.3 408.6 707.5 407.4 C710.7 406.2 713.8 405.6 717.0 405.1 C721.4 404.3 725.9 404.9 730.3 404.1 C733.5 403.5 736.6 402.9 739.8 401.7 C743.0 400.5 746.1 399.3 749.3 396.9 C752.5 394.5 755.6 391.8 758.8 387.4 C762.0 383.0 765.1 375.5 768.3 370.3 C771.5 365.1 774.6 360.0 777.8 356.1 C781.6 351.4 785.4 348.2 789.2 345.6 C792.4 343.4 795.5 341.9 798.7 340.9 C801.9 339.9 805.0 339.6 808.2 339.5 C811.4 339.4 814.5 339.6 817.7 340.5 C820.9 341.4 824.0 342.6 827.2 344.7 C830.4 346.8 833.5 349.6 836.7 353.2 C839.9 356.8 843.0 361.1 846.2 366.5 C849.4 371.9 852.5 380.1 855.7 385.5 C858.9 390.9 862.0 395.3 865.2 398.8 C868.4 402.3 871.5 404.5 874.7 406.4 C877.9 408.3 881.0 409.4 884.2 410.2 C887.0 410.9 889.9 411.0 892.7 411.1 C896.9 411.3 901.1 411.2 905.3 410.7 C909.5 410.2 913.8 409.3 918.0 408.3 C922.2 407.3 926.5 406.2 930.7 404.5 C934.9 402.9 939.2 400.3 943.4 398.4 C947.6 396.6 951.8 394.5 956.0 393.4 C960.2 392.3 964.5 392.1 968.7 391.8 C972.9 391.5 977.2 391.6 981.4 391.6 C987.7 391.6 994.1 391.6 1000.4 392.1 C1004.6 392.4 1008.8 392.9 1013.0 393.4 C1019.3 394.1 1025.7 395.2 1032.0 395.9 C1038.3 396.6 1044.7 397.2 1051.0 397.4 C1056.1 397.5 1061.2 398.0 1066.3 397.2 C1069.7 396.7 1073.0 396.2 1076.4 394.6 C1079.4 393.2 1082.3 391.5 1085.3 388.9 C1087.8 386.7 1090.4 384.7 1092.9 380.7 C1095.0 377.4 1097.1 372.9 1099.2 368.0 C1101.3 363.1 1103.4 356.4 1105.5 351.5 C1108.9 343.6 1112.2 338.0 1115.6 332.1 C1118.2 327.5 1120.8 322.8 1123.4 319.4 C1126.7 315.1 1129.9 312.6 1133.2 310.6 C1137.8 307.8 1142.3 307.7 1146.9 307.7 C1150.8 307.7 1154.7 308.1 1158.6 309.7 C1161.9 311.0 1165.1 312.4 1168.4 315.5 C1171.7 318.6 1174.9 322.2 1178.2 328.2 C1180.8 333.0 1183.4 339.6 1186.0 345.8 C1188.6 352.0 1191.2 359.1 1193.8 365.3 C1196.4 371.5 1199.0 378.1 1201.6 382.9 C1204.9 388.9 1208.1 392.4 1211.4 395.6 C1215.3 399.4 1219.2 401.1 1223.1 402.5 C1227.7 404.2 1232.2 403.2 1236.8 404.0 C1242.0 404.9 1247.2 405.3 1252.4 407.9 C1256.3 409.9 1260.2 412.1 1264.1 416.1 C1268.0 420.1 1272.0 426.4 1275.9 431.8 C1279.1 436.2 1282.4 442.0 1285.6 445.4 C1288.9 448.8 1292.1 450.6 1295.4 452.3 C1299.3 454.4 1303.2 455.3 1307.1 456.2 C1310.4 457.0 1313.6 457.1 1316.9 457.6" fill="none" stroke="#3d92c2" stroke-width="1.6"/>
</svg>
<div class="a" style="left:632px;top:547.5px;width:11px;height:2px;background:#3d92c2;border-radius:1px"></div>
<div class="t " style="left:648.5px;top:543.4px;font-size:10.20px;font-weight:400;color:#616161;">12 May 2024–11 May 2025</div>
<svg class="a" style="left:786px;top:546px" width="14" height="4" viewBox="0 0 14 4"><path d="M1.5 2 H13" stroke="#8ba7b8" stroke-width="1.5" stroke-dasharray="0.01 3.6" stroke-linecap="round"/></svg>
<div class="t " style="left:803.0px;top:543.4px;font-size:10.20px;font-weight:400;color:#616161;">13 May 2023–11 May 2024</div>
<div class="card" style="left:1350px;top:222px;width:546px;height:350px"></div>
<div class="t " style="left:1365.0px;top:239.1px;font-size:12.30px;font-weight:700;color:#303030;letter-spacing:-0.25px"><span class="ul">Total sales breakdown</span></div>
<div class="a" style="left:1364.5px;top:262.6px;width:515.5px;height:33.3px;background:#f7f7f7;border-radius:8px"></div>
<div class="t " style="left:1375.7px;top:273.4px;font-size:12.20px;font-weight:400;color:#4b5794;">Gross sales</div>
<div class="t " style="right:92.0px;top:273.7px;font-size:11.80px;font-weight:400;color:#303030;">CA$17,190.61</div>
<svg class="a" style="left:1835.5px;top:277.2px" width="6" height="6" viewBox="0 0 10 10"><path d="M2.2 2.2 L7.6 7.6 M3.2 7.6 H7.6 V3.2" fill="none" stroke="#616161" stroke-width="1.8"/></svg>
<div class="t " style="left:1843.5px;top:274.9px;font-size:10.40px;font-weight:700;color:#616161;">1.7%</div>
<div class="a" style="left:1364.5px;top:299.9px;width:515.5px;height:33.3px;background:#f7f7f7;border-radius:8px"></div>
<div class="t " style="left:1375.7px;top:310.7px;font-size:12.20px;font-weight:400;color:#4b5794;">Discounts</div>
<div class="t " style="right:92.0px;top:311.1px;font-size:11.80px;font-weight:400;color:#303030;">-CA$1,004.79</div>
<svg class="a" style="left:1835.5px;top:314.5px" width="6" height="6" viewBox="0 0 10 10"><path d="M2.2 7.8 L7.6 2.4 M3.2 2.4 H7.6 V6.8" fill="none" stroke="#29845a" stroke-width="1.8"/></svg>
<div class="t " style="left:1843.5px;top:312.2px;font-size:10.40px;font-weight:700;color:#29845a;">46%</div>
<div class="a" style="left:1364.5px;top:337.3px;width:515.5px;height:33.3px;background:#f7f7f7;border-radius:8px"></div>
<div class="t " style="left:1375.7px;top:348.1px;font-size:12.20px;font-weight:400;color:#4b5794;">Returns</div>
<div class="t " style="right:92.0px;top:348.4px;font-size:11.80px;font-weight:400;color:#303030;">-CA$723.56</div>
<svg class="a" style="left:1835.5px;top:351.9px" width="6" height="6" viewBox="0 0 10 10"><path d="M2.2 7.8 L7.6 2.4 M3.2 2.4 H7.6 V6.8" fill="none" stroke="#616161" stroke-width="1.8"/></svg>
<div class="t " style="left:1843.5px;top:349.6px;font-size:10.40px;font-weight:700;color:#616161;">23%</div>
<div class="a" style="left:1364.5px;top:374.6px;width:515.5px;height:33.3px;background:#f7f7f7;border-radius:8px"></div>
<div class="t " style="left:1375.7px;top:385.4px;font-size:12.20px;font-weight:400;color:#4b5794;">Net sales</div>
<div class="t " style="right:92.0px;top:385.7px;font-size:11.80px;font-weight:400;color:#303030;">CA$15,462.26</div>
<svg class="a" style="left:1839.0px;top:389.2px" width="6" height="6" viewBox="0 0 10 10"><path d="M2.2 7.8 L7.6 2.4 M3.2 2.4 H7.6 V6.8" fill="none" stroke="#29845a" stroke-width="1.8"/></svg>
<div class="t " style="left:1847.0px;top:386.9px;font-size:10.40px;font-weight:700;color:#29845a;">3%</div>
<div class="a" style="left:1364.5px;top:412.0px;width:515.5px;height:33.3px;background:#f7f7f7;border-radius:8px"></div>
<div class="t " style="left:1375.7px;top:422.7px;font-size:12.20px;font-weight:400;color:#4b5794;">Shipping charges</div>
<div class="t " style="right:92.0px;top:423.1px;font-size:11.80px;font-weight:400;color:#303030;">CA$1,153.30</div>
<svg class="a" style="left:1835.5px;top:426.6px" width="6" height="6" viewBox="0 0 10 10"><path d="M2.2 2.2 L7.6 7.6 M3.2 7.6 H7.6 V3.2" fill="none" stroke="#616161" stroke-width="1.8"/></svg>
<div class="t " style="left:1843.5px;top:424.3px;font-size:10.40px;font-weight:700;color:#616161;">1.1%</div>
<div class="a" style="left:1364.5px;top:449.3px;width:515.5px;height:33.3px;background:#f7f7f7;border-radius:8px"></div>
<div class="t " style="left:1375.7px;top:460.1px;font-size:12.20px;font-weight:400;color:#4b5794;">Return fees</div>
<div class="t " style="right:92.0px;top:460.4px;font-size:11.80px;font-weight:400;color:#303030;">CA$0.00</div>
<div class="a" style="left:1847px;top:465px;width:11px;height:1px;background:#8a8a8a"></div>
<div class="a" style="left:1364.5px;top:486.6px;width:515.5px;height:33.3px;background:#f7f7f7;border-radius:8px"></div>
<div class="t " style="left:1375.7px;top:497.4px;font-size:12.20px;font-weight:400;color:#4b5794;">Taxes</div>
<div class="t " style="right:92.0px;top:497.8px;font-size:11.80px;font-weight:400;color:#303030;">CA$61.32</div>
<div class="a" style="left:1847px;top:503px;width:11px;height:1px;background:#8a8a8a"></div>
<div class="a" style="left:1364.5px;top:524.0px;width:515.5px;height:33.3px;background:#f7f7f7;border-radius:8px"></div>
<div class="t " style="left:1375.7px;top:534.8px;font-size:12.20px;font-weight:400;color:#4b5794;">Total sales</div>
<div class="t " style="right:92.0px;top:535.1px;font-size:11.80px;font-weight:400;color:#303030;">CA$16,676.88</div>
<svg class="a" style="left:1839.0px;top:538.6px" width="6" height="6" viewBox="0 0 10 10"><path d="M2.2 7.8 L7.6 2.4 M3.2 2.4 H7.6 V6.8" fill="none" stroke="#29845a" stroke-width="1.8"/></svg>
<div class="t " style="left:1847.0px;top:536.3px;font-size:10.40px;font-weight:700;color:#29845a;">3%</div>
<div class="card" style="left:230px;top:587px;width:546px;height:228px"></div>
<div class="t " style="left:244.8px;top:603.8px;font-size:12.30px;font-weight:700;color:#303030;letter-spacing:-0.25px"><span class="ul">Total sales by sales channel</span></div>
<svg class="a" style="left:0;top:0" width="1919" height="947" viewBox="0 0 1919 947"><path d="M364.54 642.21 A71.20 71.20 0 1 1 300.20 680.41" fill="none" stroke="#38a8e8" stroke-width="15.2"/><path d="M301.76 677.58 A71.20 71.20 0 0 1 322.36 655.15" fill="none" stroke="#7b2fe0" stroke-width="15.2"/><path d="M324.73 653.55 A71.20 71.20 0 0 1 341.65 645.57" fill="none" stroke="#6b6fe6" stroke-width="15.2"/><path d="M344.27 644.79 A71.20 71.20 0 0 1 351.30 643.22" fill="none" stroke="#d63fb4" stroke-width="15.2"/><path d="M353.76 642.84 A71.20 71.20 0 0 1 359.82 642.29" fill="none" stroke="#24b5ae" stroke-width="15.2"/></svg>
<div class="t " style="left:363.0px;transform:translateX(-50%);top:698.8px;font-size:17.50px;font-weight:700;color:#303030;">CA$16.7T</div>
<svg class="a" style="left:350.5px;top:721.0px" width="7" height="7" viewBox="0 0 10 10"><path d="M2.2 7.8 L7.6 2.4 M3.2 2.4 H7.6 V6.8" fill="none" stroke="#29845a" stroke-width="1.8"/></svg>
<div class="t " style="left:359.0px;top:719.5px;font-size:10.00px;font-weight:700;color:#29845a;">3%</div>
<div class="a" style="left:469px;top:660.4px;width:11px;height:11px;background:#38a8e8;border-radius:2px"></div>
<div class="t " style="left:483.2px;top:660.3px;font-size:11.30px;font-weight:400;color:#616161;">Online Store</div>
<div class="t " style="right:1230.0px;top:660.6px;font-size:11.00px;font-weight:400;color:#616161;">CA$13.9T</div>
<svg class="a" style="left:693.0px;top:662.9px" width="7" height="7" viewBox="0 0 10 10"><path d="M2.2 7.8 L7.6 2.4 M3.2 2.4 H7.6 V6.8" fill="none" stroke="#29845a" stroke-width="1.8"/></svg>
<div class="t " style="left:701.5px;top:660.9px;font-size:10.60px;font-weight:700;color:#29845a;">2%</div>
<div class="a" style="left:469px;top:685.1px;width:11px;height:11px;background:#7b2fe0;border-radius:2px"></div>
<div class="t " style="left:483.2px;top:685.0px;font-size:11.30px;font-weight:400;color:#616161;">Alvio Platform Connector</div>
<div class="t " style="right:1230.0px;top:685.3px;font-size:11.00px;font-weight:400;color:#616161;">CA$1.2T</div>
<div class="a" style="left:693.4px;top:690.1px;width:10.7px;height:1.3px;background:#616161"></div>
<div class="a" style="left:469px;top:709.8px;width:11px;height:11px;background:#6b6fe6;border-radius:2px"></div>
<div class="t " style="left:483.2px;top:709.7px;font-size:11.30px;font-weight:400;color:#616161;">Juo Subscriptions</div>
<div class="t " style="right:1230.0px;top:710.0px;font-size:11.00px;font-weight:400;color:#616161;">CA$804.51</div>
<svg class="a" style="left:692.8px;top:712.8px" width="6" height="6" viewBox="0 0 10 10"><path d="M2.2 7.8 L7.6 2.4 M3.2 2.4 H7.6 V6.8" fill="none" stroke="#29845a" stroke-width="1.8"/></svg>
<div class="t " style="left:700.3px;top:711.0px;font-size:9.20px;font-weight:700;color:#29845a;">804%</div>
<div class="a" style="left:469px;top:734.5px;width:11px;height:11px;background:#d63fb4;border-radius:2px"></div>
<div class="t " style="left:483.2px;top:734.4px;font-size:11.30px;font-weight:400;color:#616161;">Social Supermarket</div>
<div class="t " style="right:1230.0px;top:734.7px;font-size:11.00px;font-weight:400;color:#616161;">CA$368</div>
<div class="a" style="left:693.4px;top:739.5px;width:10.7px;height:1.3px;background:#616161"></div>
<div class="t " style="left:474.5px;top:766.3px;font-size:10.30px;font-weight:400;color:#616161;">+7 more</div>
<div class="card" style="left:790px;top:587px;width:546px;height:228px"></div>
<div class="t " style="left:805.0px;top:603.8px;font-size:12.30px;font-weight:700;color:#303030;letter-spacing:-0.25px"><span class="ul">Average order value over time</span></div>
<div class="t " style="left:804.8px;top:628.2px;font-size:18.90px;font-weight:700;color:#303030;">CA$65.80</div>
<svg class="a" style="left:898.0px;top:634.9px" width="7" height="7" viewBox="0 0 10 10"><path d="M2.2 7.8 L7.6 2.4 M3.2 2.4 H7.6 V6.8" fill="none" stroke="#29845a" stroke-width="1.8"/></svg>
<div class="t " style="left:906.5px;top:632.9px;font-size:10.60px;font-weight:700;color:#29845a;">2%</div>
<div class="a" style="left:866.7px;top:666.0px;width:451px;height:1px;background:#ececec"></div>
<div class="t " style="left:806.9px;top:661.3px;font-size:10.60px;font-weight:400;color:#616161;">CA$200</div>
<div class="a" style="left:866.7px;top:737.1px;width:451px;height:1px;background:#ececec"></div>
<div class="t " style="left:806.9px;top:732.4px;font-size:10.60px;font-weight:400;color:#616161;">CA$0</div>
<div class="t " style="left:866.7px;transform:translateX(-50%);top:751.3px;font-size:10.60px;font-weight:400;color:#616161;">May 2024</div>
<div class="t " style="left:941.7px;transform:translateX(-50%);top:751.3px;font-size:10.60px;font-weight:400;color:#616161;">Jul 2024</div>
<div class="t " style="left:1016.7px;transform:translateX(-50%);top:751.3px;font-size:10.60px;font-weight:400;color:#616161;">Sept 2024</div>
<div class="t " style="left:1091.7px;transform:translateX(-50%);top:751.3px;font-size:10.60px;font-weight:400;color:#616161;">Nov 2024</div>
<div class="t " style="left:1166.7px;transform:translateX(-50%);top:751.3px;font-size:10.60px;font-weight:400;color:#616161;">Jan 2025</div>
<div class="t " style="left:1241.7px;transform:translateX(-50%);top:751.3px;font-size:10.60px;font-weight:400;color:#616161;">Mar 2025</div>
<svg class="a" style="left:0;top:0" width="1919" height="947" viewBox="0 0 1919 947">
<defs><linearGradient id="ag" x1="0" y1="690" x2="0" y2="738" gradientUnits="userSpaceOnUse"><stop offset="0" stop-color="#3e9fd6" stop-opacity=".06"/><stop offset="1" stop-color="#3e9fd6" stop-opacity="0"/></linearGradient></defs>
<path d="M867.2 709.7 C872.8 710.0 878.4 710.3 884.0 710.6 C894.0 711.1 903.9 710.8 913.9 711.8 C919.9 712.4 925.9 713.7 931.9 714.2 C939.1 714.8 946.3 714.5 953.5 715.0 C958.3 715.3 963.1 716.0 967.9 716.2 C973.9 716.5 979.9 716.4 985.9 716.2 C991.9 716.0 997.8 715.4 1003.8 715.0 C1011.8 714.5 1019.8 714.7 1027.8 713.6 C1031.8 713.0 1035.8 711.9 1039.8 711.4 C1044.6 710.8 1049.4 710.4 1054.2 710.6 C1058.2 710.8 1062.2 710.7 1066.2 712.1 C1069.4 713.2 1072.5 716.0 1075.7 717.2 C1080.5 719.1 1085.2 719.0 1090.0 719.6 C1094.0 720.1 1098.0 720.2 1102.0 720.8 C1106.0 721.4 1110.0 722.8 1114.0 723.4 C1118.8 724.1 1123.6 724.4 1128.4 724.3 C1132.4 724.2 1136.3 723.9 1140.3 723.2 C1144.7 722.4 1149.1 720.4 1153.5 719.6 C1158.3 718.7 1163.1 718.7 1167.9 718.4 C1175.9 717.8 1183.9 717.7 1191.9 717.2 C1197.9 716.8 1203.9 717.9 1209.9 716.0 C1211.9 715.4 1213.9 715.2 1215.9 713.6 C1217.9 712.0 1219.8 708.9 1221.8 706.4 C1223.8 703.9 1225.8 700.5 1227.8 698.6 C1229.8 696.7 1231.8 695.8 1233.8 695.0 C1236.6 693.8 1239.4 693.5 1242.2 693.5 C1245.0 693.5 1247.8 693.8 1250.6 695.0 C1253.0 696.1 1255.4 697.8 1257.8 699.8 C1260.6 702.1 1263.4 706.3 1266.2 708.2 C1268.6 709.8 1271.0 710.2 1273.4 710.9 C1278.2 712.2 1283.0 711.5 1287.8 712.1 C1291.4 712.5 1295.0 713.1 1298.6 713.6 C1301.8 714.1 1305.0 714.8 1308.2 715.0 C1311.0 715.2 1313.7 715.0 1316.5 715.0 L1317.5 737.6 L866.7 737.6 Z" fill="url(#ag)"/>
<path d="M867.2 709.7 C872.0 710.2 876.8 710.1 881.6 711.2 C885.6 712.2 889.6 714.4 893.6 715.4 C900.4 717.0 907.1 715.9 913.9 716.6 C918.3 717.1 922.7 718.0 927.1 718.4 C936.7 719.4 946.3 719.0 955.9 719.0 C967.9 719.0 979.8 718.7 991.8 717.8 C997.8 717.3 1003.8 716.5 1009.8 716.0 C1017.8 715.4 1025.8 715.2 1033.8 715.0 C1043.8 714.7 1053.8 714.4 1063.8 714.5 C1072.5 714.6 1081.3 714.9 1090.0 715.4 C1096.0 715.7 1102.0 715.8 1108.0 716.6 C1112.0 717.1 1116.0 718.3 1120.0 718.6 C1124.0 718.9 1128.0 718.8 1132.0 718.6 C1138.0 718.3 1143.9 716.6 1149.9 716.0 C1157.9 715.2 1165.9 715.3 1173.9 715.0 C1185.9 714.5 1197.9 714.1 1209.9 713.8 C1221.9 713.5 1233.8 714.8 1245.8 713.3 C1249.8 712.8 1253.8 712.7 1257.8 711.4 C1260.2 710.6 1262.6 708.9 1265.0 708.2 C1268.6 707.1 1272.2 707.1 1275.8 707.0 C1279.8 706.9 1283.8 706.7 1287.8 707.8 C1290.6 708.5 1293.4 708.1 1296.2 711.2 C1297.8 713.0 1299.4 716.6 1301.0 718.4 C1302.6 720.2 1304.2 721.1 1305.8 722.0 C1309.4 724.1 1312.9 723.5 1316.5 724.3" fill="none" stroke="#8ba7b8" stroke-width="1.5" stroke-dasharray="0.01 3.6" stroke-linecap="round"/>
<path d="M867.2 709.7 C872.8 710.0 878.4 710.3 884.0 710.6 C894.0 711.1 903.9 710.8 913.9 711.8 C919.9 712.4 925.9 713.7 931.9 714.2 C939.1 714.8 946.3 714.5 953.5 715.0 C958.3 715.3 963.1 716.0 967.9 716.2 C973.9 716.5 979.9 716.4 985.9 716.2 C991.9 716.0 997.8 715.4 1003.8 715.0 C1011.8 714.5 1019.8 714.7 1027.8 713.6 C1031.8 713.0 1035.8 711.9 1039.8 711.4 C1044.6 710.8 1049.4 710.4 1054.2 710.6 C1058.2 710.8 1062.2 710.7 1066.2 712.1 C1069.4 713.2 1072.5 716.0 1075.7 717.2 C1080.5 719.1 1085.2 719.0 1090.0 719.6 C1094.0 720.1 1098.0 720.2 1102.0 720.8 C1106.0 721.4 1110.0 722.8 1114.0 723.4 C1118.8 724.1 1123.6 724.4 1128.4 724.3 C1132.4 724.2 1136.3 723.9 1140.3 723.2 C1144.7 722.4 1149.1 720.4 1153.5 719.6 C1158.3 718.7 1163.1 718.7 1167.9 718.4 C1175.9 717.8 1183.9 717.7 1191.9 717.2 C1197.9 716.8 1203.9 717.9 1209.9 716.0 C1211.9 715.4 1213.9 715.2 1215.9 713.6 C1217.9 712.0 1219.8 708.9 1221.8 706.4 C1223.8 703.9 1225.8 700.5 1227.8 698.6 C1229.8 696.7 1231.8 695.8 1233.8 695.0 C1236.6 693.8 1239.4 693.5 1242.2 693.5 C1245.0 693.5 1247.8 693.8 1250.6 695.0 C1253.0 696.1 1255.4 697.8 1257.8 699.8 C1260.6 702.1 1263.4 706.3 1266.2 708.2 C1268.6 709.8 1271.0 710.2 1273.4 710.9 C1278.2 712.2 1283.0 711.5 1287.8 712.1 C1291.4 712.5 1295.0 713.1 1298.6 713.6 C1301.8 714.1 1305.0 714.8 1308.2 715.0 C1311.0 715.2 1313.7 715.0 1316.5 715.0" fill="none" stroke="#3d92c2" stroke-width="1.7"/>
</svg>
<div class="a" style="left:912px;top:791.3px;width:11px;height:2px;background:#3d92c2;border-radius:1px"></div>
<div class="t " style="left:928.6px;top:787.4px;font-size:10.20px;font-weight:400;color:#616161;">12 May 2024–11 May 2025</div>
<svg class="a" style="left:1066px;top:790px" width="14" height="4" viewBox="0 0 14 4"><path d="M1.5 2 H13" stroke="#8ba7b8" stroke-width="1.5" stroke-dasharray="0.01 3.6" stroke-linecap="round"/></svg>
<div class="t " style="left:1083.8px;top:787.4px;font-size:10.20px;font-weight:400;color:#616161;">13 May 2023–11 May 2024</div>
<div class="card" style="left:1350px;top:587px;width:546px;height:228px"></div>
<div class="t " style="left:1364.7px;top:603.8px;font-size:12.30px;font-weight:700;color:#303030;letter-spacing:-0.25px"><span class="ul">Total sales by product</span></div>
<div class="t " style="left:1364.7px;top:630.7px;font-size:10.40px;font-weight:400;color:#616161;">Farm Fund (Donation) - Help Sharad Rebuild - Nepal Ilam · tearebellion · None</div>
<div class="a" style="left:1364.7px;top:644.6px;width:399px;height:29px;background:#38a8e8;border-radius:0 4px 4px 0"></div>
<div class="t " style="left:1773.4px;top:655.2px;font-size:10.60px;font-weight:400;color:#616161;">CA$1,582.11</div>
<div class="a" style="left:1841px;top:659.5px;width:10.5px;height:1.3px;background:#616161"></div>
<div class="a" style="left:1364.7px;top:675.7px;width:2px;height:31.3px;background:#dcecf7"></div>
<div class="t " style="left:1374.3px;top:686.3px;font-size:10.60px;font-weight:400;color:#616161;">CA$0.00</div>
<div class="t " style="left:1364.7px;top:725.6px;font-size:10.20px;font-weight:400;color:#616161;">Organic Matcha · MATCHA GREEN TEA · None</div>
<div class="a" style="left:1364.7px;top:739px;width:255.5px;height:29.5px;background:#38a8e8;border-radius:0 4px 4px 0"></div>
<div class="t " style="left:1629.0px;top:749.4px;font-size:10.60px;font-weight:400;color:#616161;">CA$1,013.14</div>
<svg class="a" style="left:1696.5px;top:751.0px" width="7" height="7" viewBox="0 0 10 10"><path d="M2.2 7.8 L7.6 2.4 M3.2 2.4 H7.6 V6.8" fill="none" stroke="#29845a" stroke-width="1.8"/></svg>
<div class="t " style="left:1705.0px;top:749.0px;font-size:10.60px;font-weight:700;color:#29845a;">24%</div>
<div class="a" style="left:1364.7px;top:770.8px;width:205.3px;height:30px;background:#dfeef8;border-radius:0 4px 4px 0"></div>
<div class="t " style="left:1579.0px;top:781.4px;font-size:10.60px;font-weight:400;color:#616161;">CA$813.93</div>
<div class="card" style="left:230px;top:829.5px;width:546px;height:140px"></div>
<div class="card" style="left:790px;top:829.5px;width:546px;height:140px"></div>
<div class="card" style="left:1350px;top:829.5px;width:546px;height:140px"></div>
<div class="t " style="left:244.8px;top:846.4px;font-size:12.30px;font-weight:700;color:#303030;letter-spacing:-0.25px"><span class="ul">Sessions over time</span></div>
<div class="t " style="left:244.8px;top:871.9px;font-size:17.90px;font-weight:700;color:#303030;">61,327</div>
<svg class="a" style="left:307.6px;top:877.2px" width="7" height="7" viewBox="0 0 10 10"><path d="M2.2 7.8 L7.6 2.4 M3.2 2.4 H7.6 V6.8" fill="none" stroke="#29845a" stroke-width="1.8"/></svg>
<div class="t " style="left:316.1px;top:875.7px;font-size:10.00px;font-weight:700;color:#29845a;">129%</div>
<div class="a" style="left:285.7px;top:909.7px;width:472px;height:1px;background:#ececec"></div>
<div class="t " style="left:247.2px;top:905.3px;font-size:9.50px;font-weight:400;color:#616161;">10T</div>
<svg class="a" style="left:0;top:0" width="1919" height="947" viewBox="0 0 1919 947"><path d="M578 948.5 C585 941.5 592 939.6 601 939.6 C611 939.6 617 942.8 625 943.9 C640 945.4 655 945.6 675 947" fill="none" stroke="#3d92c2" stroke-width="2"/></svg>
<div class="t " style="left:804.8px;top:846.4px;font-size:12.30px;font-weight:700;color:#303030;letter-spacing:-0.25px"><span class="ul">Conversion rate over time</span></div>
<div class="t " style="left:804.8px;top:871.2px;font-size:18.80px;font-weight:700;color:#303030;">0.3%</div>
<svg class="a" style="left:855.9px;top:877.2px" width="7" height="7" viewBox="0 0 10 10"><path d="M2.2 2.2 L7.6 7.6 M3.2 7.6 H7.6 V3.2" fill="none" stroke="#616161" stroke-width="1.8"/></svg>
<div class="t " style="left:864.4px;top:875.7px;font-size:10.00px;font-weight:700;color:#616161;">55%</div>
<div class="a" style="left:853.6px;top:909.7px;width:464px;height:1px;background:#ececec"></div>
<div class="t " style="left:806.9px;top:905.0px;font-size:9.80px;font-weight:400;color:#616161;">1.5%</div>
<div class="t " style="left:1364.7px;top:846.8px;font-size:12.30px;font-weight:700;color:#303030;letter-spacing:-0.25px"><span class="ul">Conversion rate breakdown</span></div>
<div class="t " style="left:1364.7px;top:871.4px;font-size:18.80px;font-weight:700;color:#303030;">0.3%</div>
<svg class="a" style="left:1415.9px;top:877.4px" width="7" height="7" viewBox="0 0 10 10"><path d="M2.2 2.2 L7.6 7.6 M3.2 7.6 H7.6 V3.2" fill="none" stroke="#616161" stroke-width="1.8"/></svg>
<div class="t " style="left:1424.4px;top:875.9px;font-size:10.00px;font-weight:700;color:#616161;">55%</div>
<div class="t " style="left:1522.0px;top:895.3px;font-size:12.10px;font-weight:400;color:#f0f0f0;">Press the "Prnt Scrn" on your keyboard to take a</div>
<div class="a" style="left:1366px;top:912px;width:11.5px;height:11.5px;background:#eeeef2;border-radius:50%"></div>
<svg class="a" style="left:1366px;top:912px" width="12" height="12" viewBox="0 0 12 12"><path d="M6.5 1.5 L5.5 10.5 M3 4.5 L8.5 3.5 M3.5 8.5 L9 7.5" stroke="#303030" stroke-width="1.2" fill="none"/></svg>
<div class="t " style="left:1383.0px;top:912.9px;font-size:11.40px;font-weight:400;color:#303030;">Sessions</div>
<div class="t " style="left:1364.7px;top:930.1px;font-size:13.00px;font-weight:700;color:#303030;">100%</div>
<div class="t " style="left:1403.9px;top:930.9px;font-size:12.00px;font-weight:400;color:#616161;">61,327</div>
<div class="t " style="left:1511.0px;top:912.9px;font-size:11.40px;font-weight:400;color:#303030;">Added to cart</div>
<div class="t " style="left:1511.0px;top:930.1px;font-size:13.00px;font-weight:700;color:#303030;">1.15%</div>
<div class="t " style="left:1551.4px;top:930.9px;font-size:12.00px;font-weight:400;color:#616161;">704</div>
<div class="t " style="left:1648.0px;top:912.9px;font-size:11.40px;font-weight:400;color:#303030;">Reached checkout</div>
<div class="t " style="left:1648.0px;top:930.1px;font-size:13.00px;font-weight:700;color:#303030;">0.72%</div>
<div class="t " style="left:1692.0px;top:930.9px;font-size:12.00px;font-weight:400;color:#616161;">443</div>
<div class="t " style="left:1784.7px;top:912.9px;font-size:11.40px;font-weight:400;color:#303030;">Completed che...</div>
<div class="t " style="left:1784.7px;top:930.1px;font-size:13.00px;font-weight:700;color:#303030;">0.3%</div>
<div class="t " style="left:1821.2px;top:930.9px;font-size:12.00px;font-weight:400;color:#616161;">183</div>
<div class="a" style="left:1500.3px;top:905.3px;width:1px;height:45px;background:#e3e3e3"></div>
<div class="a" style="left:1637.3px;top:905.3px;width:1px;height:45px;background:#e3e3e3"></div>
<div class="a" style="left:1774.3px;top:905.3px;width:1px;height:45px;background:#e3e3e3"></div>
<div class="a" style="left:0;top:946px;width:1919px;height:1px;background:#a9abb0"></div></body></html>
